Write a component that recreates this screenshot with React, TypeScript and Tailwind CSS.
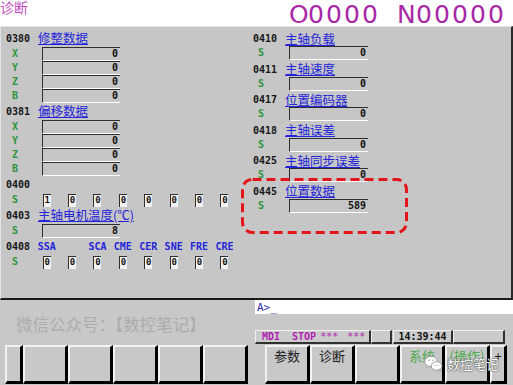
import React from "react";

const CJK = "font-['Noto_Sans_CJK_SC',sans-serif]";

function Field({ v, wide }: { v: string; wide?: boolean }) {
  return (
    <div
      className={`${wide ? "w-[79px]" : "w-[78px]"} h-[14px] border-t border-l border-b border-t-[#2e2e2e] border-l-[#2e2e2e] border-b-white flex items-center justify-end pr-[2px] text-[10px] font-bold leading-none text-[#111]`}
    >
      {v}
    </div>
  );
}

function Bit({ v }: { v: string }) {
  return (
    <div className="w-[8px] h-[13px] bg-[#f2f2f2] border-l border-t border-[#2e2e2e] flex items-center justify-center text-[9px] font-bold leading-none text-[#111]">
      {v}
    </div>
  );
}

function Header({ code, name, wide }: { code: string; name?: string; wide?: boolean }) {
  return (
    <div className={`flex items-center ${wide ? "h-[14px]" : "h-[17px]"}`}>
      <span className="w-[32px] text-[10px] font-bold leading-none text-[#151515]">{code}</span>
      {name && (
        <span className={`${CJK} text-[12.5px] leading-none text-[#2424d8] underline underline-offset-[1px]`}>
          {name}
        </span>
      )}
    </div>
  );
}

function DataRow({ label, v, right }: { label: string; v: string; right?: boolean }) {
  return (
    <div className="flex items-center h-[14px]">
      <span
        className={`${right ? "w-[36px] pl-[5px]" : "w-[36px] pl-[6px]"} text-[10px] font-bold leading-none text-[#2f9440]`}
      >
        {label}
      </span>
      <Field v={v} wide={right} />
    </div>
  );
}

function BitRow({ bits }: { bits: string[] }) {
  return (
    <div className="flex items-center h-[14px]">
      <span className="w-[28px] pl-[6px] text-[10px] font-bold leading-none text-[#2f9440]">S</span>
      <div className="grid grid-cols-[repeat(8,25.4px)] justify-items-center">
        {bits.map((b, i) => (
          <Bit key={i} v={b} />
        ))}
      </div>
    </div>
  );
}

const xyzb = [
  ["X", "0"],
  ["Y", "0"],
  ["Z", "0"],
  ["B", "0"],
];

function LeftCol() {
  return (
    <div className="w-[252px] flex flex-col pl-[5px] pt-[3px]">
      <Header code="0380" name="修整数据" />
      {xyzb.map(([l, v]) => (
        <DataRow key={"a" + l} label={l} v={v} />
      ))}
      <Header code="0381" name="偏移数据" />
      {xyzb.map(([l, v]) => (
        <DataRow key={"b" + l} label={l} v={v} />
      ))}
      <Header code="0400" />
      <BitRow bits={["1", "0", "0", "0", "0", "0", "0", "0"]} />
      <Header code="0403" name="主轴电机温度(℃)" />
      <DataRow label="S" v="8" />
      <div className="flex items-center h-[17px]">
        <span className="w-[28px] text-[10px] font-bold leading-none text-[#151515]">0408</span>
        <div className="grid grid-cols-[repeat(8,25.4px)] justify-items-center text-[10px] font-bold leading-none text-[#2424d8]">
          {["SSA", "", "SCA", "CME", "CER", "SNE", "FRE", "CRE"].map((t, i) => (
            <span key={i}>{t}</span>
          ))}
        </div>
      </div>
      <BitRow bits={["0", "0", "0", "0", "0", "0", "0", "0"]} />
    </div>
  );
}

const rightBlocks = [
  ["0410", "主轴负载", "0"],
  ["0411", "主轴速度", "0"],
  ["0417", "位置编码器", "0"],
  ["0418", "主轴误差", "0"],
  ["0425", "主轴同步误差", "0"],
  ["0445", "位置数据", "589"],
];

function RightCol() {
  return (
    <div className="flex-1 flex flex-col pt-[5px] gap-[2.5px]">
      {rightBlocks.map(([c, n, v]) => (
        <div key={c} className="flex flex-col">
          <Header code={c} name={n} wide />
          <DataRow label="S" v={v} right />
        </div>
      ))}
    </div>
  );
}

function Btn({ w, children }: { w: string; children?: React.ReactNode }) {
  return (
    <div
      className={`${w} h-[39px] shrink-0 bg-[#c8c8c8] border-t-2 border-l-2 border-t-[#f2f2f2] border-l-[#f2f2f2] border-r-[3px] border-b-[3px] border-r-black border-b-black flex justify-center pt-[1px] ${CJK} text-[13px] leading-[16px]`}
    >
      {children}
    </div>
  );
}

function StatusBox({ w, children }: { w: string; children?: React.ReactNode }) {
  return (
    <div
      className={`${w} h-[14px] shrink-0 bg-[#cbcbcb] border-t border-l border-t-[#efefef] border-l-[#efefef] border-r-2 border-b-2 border-r-[#303030] border-b-[#303030] flex items-center text-[10px] font-bold leading-none`}
    >
      {children}
    </div>
  );
}

export default function App() {
  return (
    <div className="relative w-[513px] h-[385px] overflow-hidden bg-white font-['DejaVu_Sans_Mono',monospace]">
      {/* title bar */}
      <div className="flex h-[26px] items-start justify-between">
        <span className={`${CJK} text-[14px] leading-[15px] text-[#c24fc2]`}>诊断</span>
        <div className="mt-[4px] mr-[8px] flex font-['DejaVu_Sans',sans-serif] text-[25px] leading-[22px] text-[#a828a8]">
          {"O0000 N00000".split("").map((c, i) => (
            <span key={i} className="w-[18px] text-center">
              {c}
            </span>
          ))}
        </div>
      </div>

      {/* main diagnostic panel */}
      <div className="flex h-[274px] border-t border-l border-t-[#e4e4e4] border-l-[#e4e4e4] border-r-2 border-r-[#2a2a2a] border-b-2 border-b-[#1a1a1a] bg-[#c6c6c6]">
        <LeftCol />
        <RightCol />
      </div>

      {/* lower area */}
      <div className="h-[85px] bg-[#c8c8c8] flex flex-col">
        <div className="flex h-[14px]">
          <div className="w-[255px]" />
          <div className="flex-1 bg-white flex items-center pl-[2px] text-[11px] leading-none text-[#2c2cb0]">
            A&gt;_
          </div>
        </div>
        <div className="flex h-[30px]">
          <div className={`w-[255px] pl-[16px] pt-[1px] ${CJK} text-[16.5px] leading-[18px] text-[#acacac]`}>
            微信公众号：【数控笔记】
          </div>
          <div className="flex items-end">
            <StatusBox w="w-[116px]">
              <span className="pl-[6px] text-[#b01fb0]">MDI</span>
              <span className="ml-[12px] text-[#b01fb0]">STOP</span>
              <span className="ml-[4px] font-normal text-[#b01fb0]">***</span>
              <span className="ml-[9px] font-normal text-[#b01fb0]">***</span>
            </StatusBox>
            <StatusBox w="w-[21px]" />
            <div className="w-[1px]" />
            <StatusBox w="w-[60px]">
              <span className="w-full text-center text-[#111]">14:39:44</span>
            </StatusBox>
            <StatusBox w="w-[52px]" />
          </div>
        </div>
        <div className="flex mt-[1px] pl-[5px]">
          <Btn w="w-[18px]" />
          <Btn w="w-[45px]" />
          <Btn w="w-[45px]" />
          <Btn w="w-[45px]" />
          <Btn w="w-[45px]" />
          <Btn w="w-[45px]" />
          <div className="w-[17px] shrink-0" />
          <Btn w="w-[45px]">
            <span className="text-[#1c1c1c]">参数</span>
          </Btn>
          <Btn w="w-[45px]">
            <span className="text-[#1c1c1c]">诊断</span>
          </Btn>
          <Btn w="w-[45px]" />
          <Btn w="w-[45px]">
            <span className="text-[#4caa4c]">系统</span>
          </Btn>
          <Btn w="w-[45px]">
            <span className="text-[#4caa4c]">(操作)</span>
          </Btn>
          <Btn w="w-[17px]">
            <span className="text-[#1c1c1c]">+</span>
          </Btn>
        </div>
      </div>

      {/* red dashed annotation */}
      <svg className="absolute left-[241px] top-[178px]" width="167" height="56" viewBox="0 0 167 56">
        <rect
          x="1.5"
          y="1.5"
          width="164"
          height="53"
          rx="10"
          fill="none"
          stroke="#e3151b"
          strokeWidth="3"
          strokeDasharray="9 5"
        />
      </svg>

      {/* watermark overlay */}
      <div className="absolute left-[424px] top-[355px] flex items-center gap-[4px]">
        <svg width="19" height="17" viewBox="0 0 19 17">
          <ellipse cx="7" cy="6.5" rx="6.3" ry="5.3" fill="#fff" stroke="#8a8a8a" strokeWidth="0.8" />
          <path d="M3 10.5 L2.2 13.2 L5.5 11.3 Z" fill="#fff" stroke="#8a8a8a" strokeWidth="0.6" />
          <ellipse cx="12.6" cy="11" rx="5.4" ry="4.4" fill="#fff" stroke="#8a8a8a" strokeWidth="0.8" />
          <path d="M15.6 14.2 L16.8 16.3 L13.6 15.2 Z" fill="#fff" stroke="#8a8a8a" strokeWidth="0.6" />
          <circle cx="5" cy="5.3" r="0.8" fill="#9a9a9a" />
          <circle cx="8.8" cy="5.3" r="0.8" fill="#9a9a9a" />
          <circle cx="11" cy="10.3" r="0.6" fill="#9a9a9a" />
          <circle cx="14.2" cy="10.3" r="0.6" fill="#9a9a9a" />
        </svg>
        <span className={`${CJK} text-[13px] leading-[16px] text-white [text-shadow:0_0_2px_#444,0_0_1px_#333]`}>
          数控笔记
        </span>
      </div>
    </div>
  );
}
